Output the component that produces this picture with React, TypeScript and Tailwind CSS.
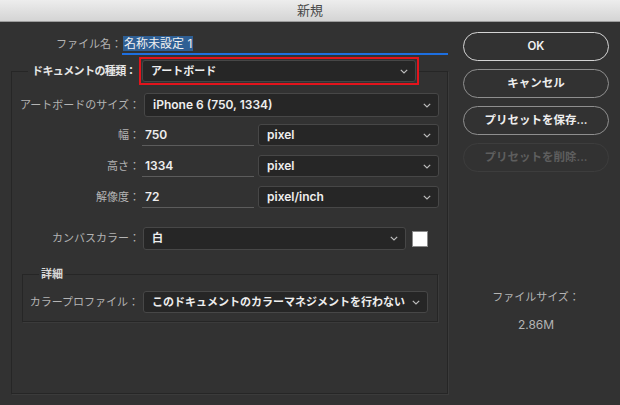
import React from 'react';

const Chevron = () => (
  <svg width="8" height="5" viewBox="0 0 8 5" className="shrink-0">
    <polyline points="0.8,0.8 4,4 7.2,0.8" fill="none" stroke="#bdbdbd" strokeWidth="1.2" />
  </svg>
);

function Select({
  value,
  className = '',
  text = 'text-[12px]',
}: {
  value: string;
  className?: string;
  text?: string;
}) {
  return (
    <div
      className={`flex min-w-0 items-center justify-between rounded-[3px] border border-[#474747] bg-[#262626] pl-[8px] pr-[7px] font-semibold text-[#eeeeee] ${className}`}
    >
      <span className={`whitespace-nowrap ${text}`}>{value}</span>
      <Chevron />
    </div>
  );
}

function Label({ text, className = '' }: { text: string; className?: string }) {
  return <div className={`shrink-0 text-right text-[11px] text-[#b4b4b4] ${className}`}>{text}</div>;
}

function NumberInput({ value }: { value: string }) {
  return (
    <div className="ml-[2px] flex h-full w-[112px] shrink-0 items-center border-b border-[#5c5c5c] pl-[3px] text-[12px] font-semibold text-[#eeeeee]">
      {value}
    </div>
  );
}

function PillButton({ text, disabled, primary }: { text: string; disabled?: boolean; primary?: boolean }) {
  return (
    <div
      className={`flex h-[29px] items-center justify-center rounded-full border text-[11.5px] font-semibold ${
        disabled
          ? 'border-[#3d3d3d] text-[#5e5e5e]'
          : primary
            ? 'border-[#d4d4d4] text-[#f2f2f2]'
            : 'border-[#8f8f8f] text-[#eeeeee]'
      }`}
    >
      {text}
    </div>
  );
}

export default function App() {
  return (
    <div className="flex h-[405px] w-[620px] flex-col overflow-hidden bg-[#323232] font-['Inter','Noto_Sans_CJK_JP',sans-serif]">
      {/* Title bar */}
      <div className="flex h-[22px] shrink-0 items-center justify-center border-b border-[#9c9c9c] bg-gradient-to-b from-[#ededed] to-[#d4d4d4] text-[13px] text-[#4a4a4a]">
        新規
      </div>

      <div className="flex flex-1">
        {/* Left column */}
        <div className="flex w-[448px] shrink-0 flex-col pb-[11px] pl-[11px] pt-[11px]">
          {/* File name */}
          <div className="flex h-[22px] items-center">
            <div className="w-[111px] shrink-0 text-right text-[11px] text-[#b4b4b4]">ファイル名：</div>
            <div className="flex h-full flex-1 items-center border-b-2 border-[#1d6fe0] pl-[1px]">
              <span className="bg-[#2f5f94] px-[1px] text-[12px] leading-[15px] text-[#f0f0f0]">名称未設定 1</span>
            </div>
          </div>

          {/* Document type group */}
          <fieldset className="mt-[2px] min-w-0 flex-1 border border-[#262626] shadow-[1px_1px_0_#3b3b3b]">
            <legend className="ml-[16px] flex items-center pl-[4px]">
              <span className="text-[11px] font-bold tracking-[-0.6px] text-[#e6e6e6]">ドキュメントの種類：</span>
              <div className="ml-[3px] h-[28px] w-[280px] border-2 border-[#e3141c] p-[1px]">
                <Select value="アートボード" className="h-full" text="text-[11px]" />
              </div>
            </legend>

            <div className="pr-[8px]">
              <div className="mt-[8px] flex h-[24px] items-center">
                <Label text="アートボードのサイズ：" className="w-[128px]" />
                <Select value="iPhone 6 (750, 1334)" className="ml-[4px] h-full flex-1" />
              </div>

              <div className="mt-[7px] flex h-[22px] items-center">
                <Label text="幅：" className="w-[128px]" />
                <NumberInput value="750" />
                <Select value="pixel" className="ml-[4px] h-full flex-1" />
              </div>

              <div className="mt-[9px] flex h-[22px] items-center">
                <Label text="高さ：" className="w-[128px]" />
                <NumberInput value="1334" />
                <Select value="pixel" className="ml-[4px] h-full flex-1" />
              </div>

              <div className="mt-[9px] flex h-[22px] items-center">
                <Label text="解像度：" className="w-[128px]" />
                <NumberInput value="72" />
                <Select value="pixel/inch" className="ml-[4px] h-full flex-1" />
              </div>

              <div className="mt-[19px] flex h-[23px] items-center">
                <Label text="カンバスカラー：" className="w-[128px]" />
                <Select value="白" className="ml-[3px] h-full w-[263px]" text="text-[11px]" />
                <div className="ml-[6px] h-[16px] w-[16px] border border-[#8a8a8a] bg-white" />
              </div>

              {/* Advanced */}
              <fieldset className="ml-[10px] mr-[1px] mt-[17px] min-w-0 border border-[#262626] pb-[8px] pr-[9px] shadow-[1px_1px_0_#3b3b3b]">
                <legend className="ml-[16px] px-[2px] text-[11px] leading-[14px] font-semibold text-[#d8d8d8]">詳細</legend>
                <div className="mt-[10px] flex h-[22px] items-center">
                  <Label text="カラープロファイル：" className="w-[116px]" />
                  <Select
                    value="このドキュメントのカラーマネジメントを行わない"
                    className="ml-[4px] h-full flex-1"
                    text="text-[11px]"
                  />
                </div>
              </fieldset>
            </div>
          </fieldset>
        </div>

        {/* Right column */}
        <div className="flex flex-1 flex-col pl-[15px] pr-[11px] pt-[10px]">
          <div className="flex flex-col gap-[8px]">
            <PillButton text="OK" primary />
            <PillButton text="キャンセル" />
            <PillButton text="プリセットを保存..." />
            <PillButton text="プリセットを削除..." disabled />
          </div>
          <div className="mt-[118px] text-center text-[11px] leading-[14px] text-[#b4b4b4]">ファイルサイズ：</div>
          <div className="mt-[14px] text-center text-[12px] leading-[14px] text-[#b4b4b4]">2.86M</div>
        </div>
      </div>
    </div>
  );
}
